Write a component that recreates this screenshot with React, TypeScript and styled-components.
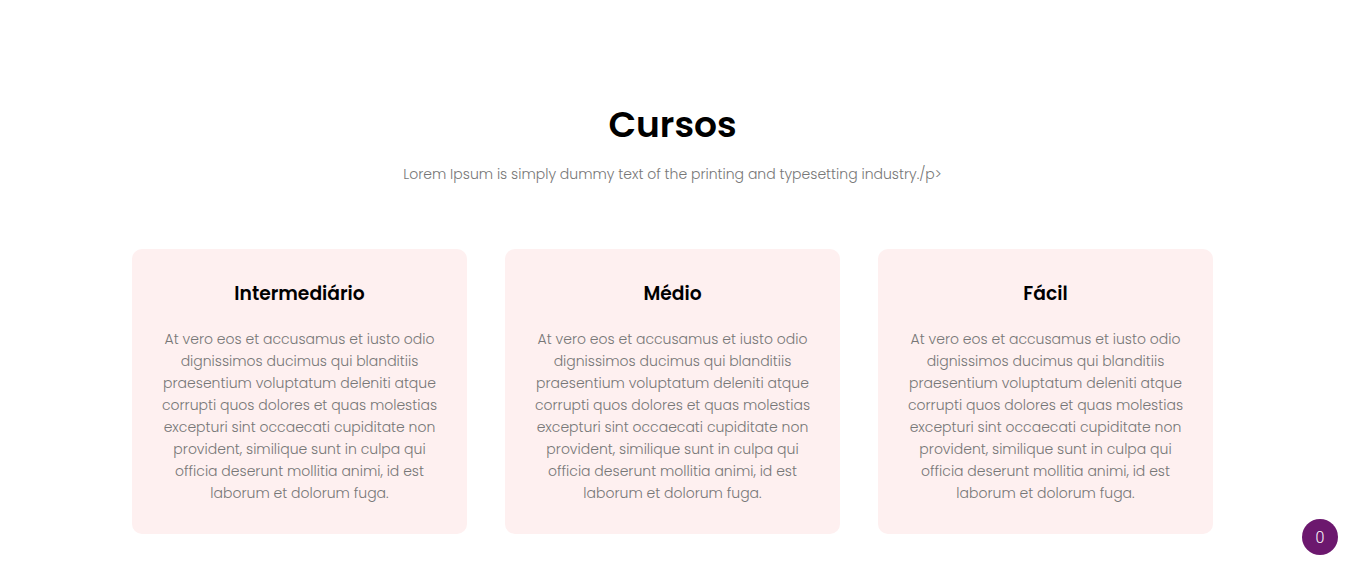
import React from 'react'
import styled, { createGlobalStyle } from 'styled-components'

const GlobalStyle = createGlobalStyle`
  body {
    margin: 0;
    background: #ffffff;
    font-family: Poppins, "Open Sans", "Liberation Sans", sans-serif;
  }
`;

const Section = styled.section`
  padding: 100px 3px 40px 0;
  display: flex;
  flex-direction: column;
  align-items: center;
`;

const Heading = styled.h2`
  margin: 0;
  font-size: 36px;
  line-height: 50px;
  font-weight: 600;
  color: #000000;
`;

const Lead = styled.p`
  margin: 13px 0 0;
  font-size: 14px;
  line-height: 22px;
  font-weight: 300;
  color: #777777;
`;

const Grid = styled.div`
  margin-top: 64px;
  display: grid;
  grid-template-columns: repeat(3, 335px);
  gap: 38px;
`;

const Card = styled.div`
  background: #fef0f0;
  border-radius: 10px;
  padding: 33px 28px 30px;
  text-align: center;
`;

const CardTitle = styled.h3`
  margin: 0;
  font-size: 18.72px;
  line-height: 24px;
  font-weight: 600;
  color: #000000;
`;

const CardText = styled.p`
  margin: 22px 0 0;
  font-size: 14px;
  line-height: 22px;
  font-weight: 300;
  color: #777777;
`;

const Badge = styled.div`
  position: fixed;
  right: 10px;
  bottom: 30px;
  width: 36px;
  height: 36px;
  border-radius: 50%;
  background: #6c186e;
  color: #ffffff;
  font-family: Roboto, sans-serif;
  font-size: 16px;
  font-weight: 300;
  display: flex;
  align-items: center;
  justify-content: center;
`;

const text =
  'At vero eos et accusamus et iusto odio dignissimos ducimus qui blanditiis praesentium voluptatum deleniti atque corrupti quos dolores et quas molestias excepturi sint occaecati cupiditate non provident, similique sunt in culpa qui officia deserunt mollitia animi, id est laborum et dolorum fuga.'

const levels = ['Intermediário', 'Médio', 'Fácil']

const App: React.FC = () => {
  return <>
    <GlobalStyle />
    <Section>
      <Heading>Cursos</Heading>
      <Lead>Lorem Ipsum is simply dummy text of the printing and typesetting industry./p&gt;</Lead>
      <Grid>
        {levels.map(level =>
          <Card key={level}>
            <CardTitle>{level}</CardTitle>
            <CardText>{text}</CardText>
          </Card>
        )}
      </Grid>
    </Section>
    <Badge>0</Badge>
  </>
}

export default App
